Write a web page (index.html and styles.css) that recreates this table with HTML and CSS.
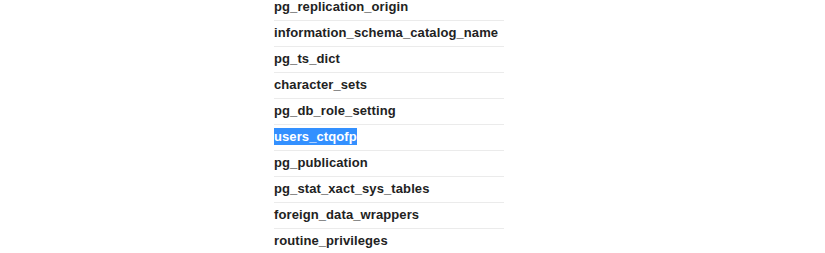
FILE: index.html
```html
<!DOCTYPE html>
<html>
<head>
<meta charset="utf-8">
<link rel="stylesheet" href="styles.css">
</head>
<body>
<ul class="table-list">
  <li class="row">pg_replication_origin</li>
  <li class="row">information_schema_catalog_name</li>
  <li class="row">pg_ts_dict</li>
  <li class="row">character_sets</li>
  <li class="row">pg_db_role_setting</li>
  <li class="row"><span class="selected">users_ctqofp</span></li>
  <li class="row">pg_publication</li>
  <li class="row">pg_stat_xact_sys_tables</li>
  <li class="row">foreign_data_wrappers</li>
  <li class="row">routine_privileges</li>
</ul>
</body>
</html>
```

FILE: styles.css
```css
html, body {
  margin: 0;
  padding: 0;
  background: #fff;
  overflow: hidden;
}
.table-list {
  list-style: none;
  margin: -5px 0 0 274px;
  padding: 0;
  width: 230px;
  font-family: "Liberation Sans", Arial, sans-serif;
  font-size: 13px;
  font-weight: bold;
  letter-spacing: 0.1px;
  color: #222;
}
.row {
  height: 24px;
  line-height: 24px;
  padding-bottom: 1px;
  border-bottom: 1px solid #ebebeb;
  white-space: nowrap;
}
.selected {
  background: #3390ff;
  color: #fff;
  padding: 1px 0;
}
```
